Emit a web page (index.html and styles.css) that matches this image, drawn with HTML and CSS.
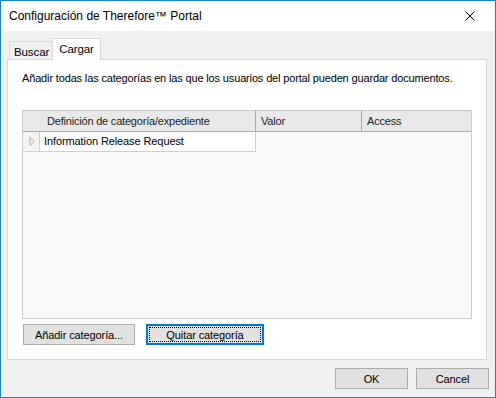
FILE: index.html
```html
<!DOCTYPE html>
<html lang="es">
<head>
<meta charset="utf-8">
<title>Configuración de Therefore™ Portal</title>
<link rel="stylesheet" href="styles.css">
</head>
<body>
<div class="window">
  <div class="titlebar">
    <span class="title">Configuración de Therefore™ Portal</span>
    <span class="close">
      <svg width="10" height="10" viewBox="0 0 10 10"><path d="M0.5 0.5 L9.5 9.5 M9.5 0.5 L0.5 9.5" stroke="#000" stroke-width="1" fill="none"/></svg>
    </span>
  </div>
  <div class="main">
    <div class="tabs">
      <div class="tab">Buscar</div>
      <div class="tab active">Cargar</div>
    </div>
    <div class="panel">
      <p class="desc">Añadir todas las categorías en las que los usuarios del portal pueden guardar documentos.</p>
      <div class="list">
        <div class="header">
          <div class="hcol c1">Definición de categoría/expediente</div>
          <div class="hcol c2">Valor</div>
          <div class="hcol c3">Access</div>
        </div>
        <div class="row">
          <div class="expander">
            <svg width="7" height="9" viewBox="0 0 7 9"><path d="M1 0.5 L5.5 4.5 L1 8.5 Z" fill="none" stroke="#b4b4b4" stroke-width="1"/></svg>
          </div>
          <div class="rowtext">Information Release Request</div>
        </div>
      </div>
      <div class="panel-buttons">
        <button class="btn wide">Añadir categoría...</button>
        <button class="btn wide focused"><span class="focusrect">Quitar categoría</span></button>
      </div>
    </div>
    <div class="footer">
      <button class="btn small">OK</button>
      <button class="btn small">Cancel</button>
    </div>
  </div>
</div>
</body>
</html>
```

FILE: styles.css
```css
html, body {
  margin: 0;
  padding: 0;
}
body {
  font-family: "Liberation Sans", Arial, sans-serif;
  font-size: 11px;
  letter-spacing: -0.1px;
  color: #000;
}
.window {
  width: 496px;
  height: 398px;
  box-sizing: border-box;
  border: 1px solid #1883d7;
  background: #f0f0f0;
  display: flex;
  flex-direction: column;
}
.titlebar {
  height: 30px;
  background: #fff;
  display: flex;
  align-items: center;
  justify-content: space-between;
  flex: none;
}
.title {
  padding-left: 8px;
  font-size: 12px;
  letter-spacing: 0;
  color: #000;
}
.close {
  width: 46px;
  height: 30px;
  display: flex;
  align-items: center;
  justify-content: center;
  margin-right: 2px;
}
.close svg { display: block; }
.main {
  padding: 7px 0 0 6px;
  display: flex;
  flex-direction: column;
}
.tabs {
  display: flex;
  align-items: flex-end;
  height: 21px;
  padding-left: 2px;
  position: relative;
  z-index: 1;
}
.tab {
  height: 18px;
  box-sizing: border-box;
  border: 1px solid #d9d9d9;
  border-bottom: none;
  background: #f0f0f0;
  padding: 3px 3px 0 4px;
  line-height: 14px;
  font-size: 11.5px;
}
.tab.active {
  height: 22px;
  margin-bottom: -1px;
  background: #fff;
  padding: 3px 6px 0 6px;
  margin-left: -1px;
}
.panel {
  width: 480px;
  height: 301px;
  box-sizing: border-box;
  border: 1px solid #d9d9d9;
  background: #fff;
  padding: 0 0 0 14px;
  display: flex;
  flex-direction: column;
}
.desc {
  margin: 11px 0 0 0;
  line-height: 15px;
  height: 15px;
  font-size: 11px;
  letter-spacing: -0.15px;
  white-space: nowrap;
}
.list {
  margin-top: 24px;
  width: 450px;
  height: 209px;
  box-sizing: border-box;
  border: 1px solid #c9c9c9;
  background: #f8f8f8;
}
.header {
  display: flex;
  height: 21px;
  box-sizing: border-box;
  border-bottom: 1px solid #a9a9a9;
  background: #e9e9e9;
}
.hcol {
  box-sizing: border-box;
  line-height: 21px;
  color: #222;
  border-right: 1px solid #a9a9a9;
  white-space: nowrap;
  letter-spacing: -0.2px;
}
.c1 { width: 233px; padding-left: 24px; }
.c2 { width: 106px; padding-left: 5px; }
.c3 { flex: 1; padding-left: 5px; border-right: none; }
.row {
  display: flex;
  width: 233px;
  height: 20px;
  box-sizing: border-box;
  background: #fff;
  border-right: 1px solid #cfcfcf;
  border-bottom: 1px solid #cfcfcf;
}
.expander {
  width: 17px;
  box-sizing: border-box;
  border-right: 1px solid #cfcfcf;
  display: flex;
  align-items: center;
  padding-left: 6px;
  background: #f3f3f3;
}
.expander svg { display: block; }
.rowtext {
  padding-left: 4px;
  line-height: 19px;
  white-space: nowrap;
}
.panel-buttons {
  display: flex;
  gap: 11px;
  margin-top: 5px;
  padding-left: 1px;
}
.btn {
  font-family: "Liberation Sans", Arial, sans-serif;
  font-size: 11px;
  letter-spacing: -0.1px;
  color: #000;
  background: #e1e1e1;
  border: 1px solid #adadad;
  box-sizing: border-box;
  height: 21px;
  padding: 0;
  margin: 0;
  display: flex;
  align-items: center;
  justify-content: center;
}
.btn.wide { width: 112px; }
.btn.wide.focused { width: 118px; }
.btn.focused {
  border: 2px solid #0078d7;
  padding: 1px;
}
.focusrect {
  display: flex;
  align-items: center;
  justify-content: center;
  width: 100%;
  height: 100%;
  box-sizing: border-box;
  border: 1px dotted #000;
}
.footer {
  display: flex;
  justify-content: flex-end;
  gap: 8px;
  margin-top: 8px;
  padding-right: 6px;
}
.btn.small { width: 73px; }
```
